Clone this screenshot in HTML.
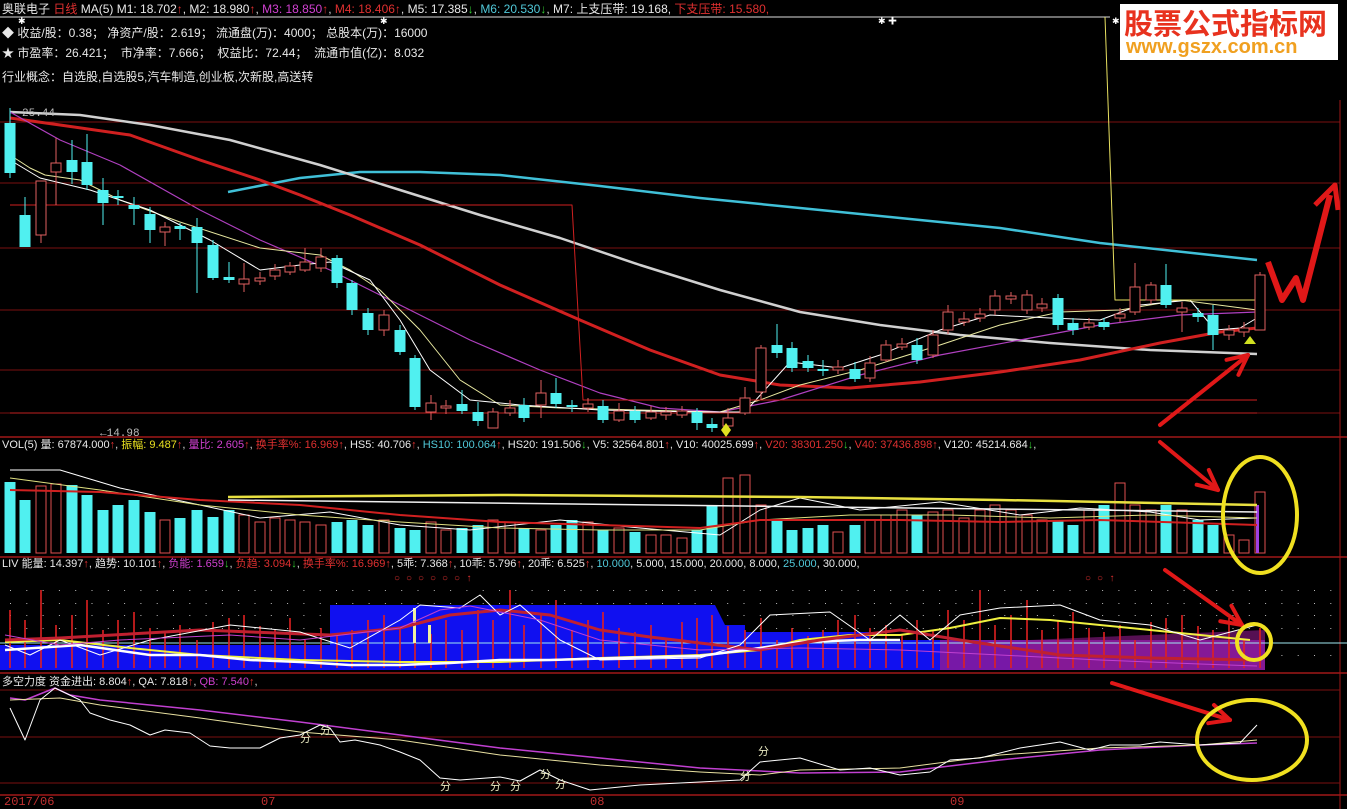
<!DOCTYPE html>
<html><head><meta charset="utf-8"><style>
html,body{margin:0;padding:0;background:#000;}
body{width:1347px;height:809px;overflow:hidden;position:relative;font-family:"Liberation Mono","Noto Sans CJK SC",monospace;}
.t{position:absolute;white-space:nowrap;font-size:11px;color:#ddd;line-height:13px;}
.w{color:#e8e8e8}.r{color:#e03030}.m{color:#d040d0}.c{color:#50c8d8}.y{color:#e8e020}
.cn{font-family:"Liberation Sans","Noto Sans CJK SC",sans-serif;}
#logo{position:absolute;left:1120px;top:4px;width:218px;height:56px;background:#fff;}
#logo .a{position:absolute;left:4px;top:0;font:bold 29px "Noto Sans CJK SC",sans-serif;color:#e8321e;letter-spacing:0px;line-height:36px;}
#logo .b{position:absolute;left:6px;top:32px;font:bold 20px "Liberation Sans",sans-serif;color:#f0a020;line-height:22px;}
</style></head><body>
<svg id="s" width="1347" height="809" style="position:absolute;left:0;top:0"></svg>

<div class="t cn" style="left:2px;top:3px;font-size:12px"><span class="w">奥联电子</span> <span class="r">日线</span> <span class="w">MA(5) M1: 18.702</span><span class="r">↑</span><span class="w">, M2: 18.980</span><span class="r">↑</span>, <span class="m">M3: 18.850</span><span class="r">↑</span>, <span class="r">M4: 18.406↑</span>, <span class="w">M5: 17.385</span><span style="color:#3c3">↓</span>, <span class="c">M6: 20.530</span><span style="color:#3c3">↓</span>, <span class="w">M7: 上支压带: 19.168,</span> <span class="r">下支压带: 15.580,</span></div>
<div class="t cn w" style="left:2px;top:27px;font-size:12px">◆ 收益/股：0.38； 净资产/股：2.619； 流通盘(万)：4000； 总股本(万)：16000</div>
<div class="t cn w" style="left:2px;top:47px;font-size:12px">★ 市盈率：26.421；&nbsp; 市净率：7.666；&nbsp; 权益比：72.44；&nbsp; 流通市值(亿)：8.032</div>
<div class="t cn w" style="left:2px;top:71px;font-size:12px">行业概念：自选股,自选股5,汽车制造,创业板,次新股,高送转</div>
<div class="t w" style="left:22px;top:108px;color:#bbb">25.44</div>
<div class="t w" style="left:100px;top:428px;color:#bbb">←14.98</div>

<div class="t cn" style="left:2px;top:439px"><span class="w">VOL(5) 量: 67874.000</span><span class="r">↑</span>, <span class="y">振幅: 9.487</span><span class="r">↑</span>, <span class="m">量比: 2.605</span><span class="r">↑</span>, <span class="r">换手率%: 16.969↑</span>, <span class="w">HS5: 40.706</span><span class="r">↑</span>, <span class="c">HS10: 100.064</span><span class="r">↑</span>, <span class="w">HS20: 191.506</span><span style="color:#3c3">↓</span>, <span class="w">V5: 32564.801</span><span class="r">↑</span>, <span class="w">V10: 40025.699</span><span class="r">↑</span>, <span class="r">V20: 38301.250</span><span style="color:#3c3">↓</span>, <span class="r">V40: 37436.898↑</span>, <span class="w">V120: 45214.684</span><span style="color:#3c3">↓</span>,</div>
<div class="t cn" style="left:2px;top:558px"><span class="w">LIV 能量: 14.397</span><span class="r">↑</span>, <span class="w">趋势: 10.101</span><span class="r">↑</span>, <span class="m">负能: 1.659</span><span style="color:#3c3">↓</span>, <span class="r">负趋: 3.094</span><span style="color:#3c3">↓</span>, <span class="r">换手率%: 16.969↑</span>, <span class="w">5乖: 7.368</span><span class="r">↑</span>, <span class="w">10乖: 5.796</span><span class="r">↑</span>, <span class="w">20乖: 6.525</span><span class="r">↑</span>, <span class="c">10.000</span>, <span class="w">5.000, 15.000, 20.000, 8.000,</span> <span class="c">25.000</span>, <span class="w">30.000,</span></div>
<div class="t cn" style="left:2px;top:676px"><span class="w">多空力度 资金进出: 8.804</span><span class="r">↑</span>, <span class="w">QA: 7.818</span><span class="r">↑</span>, <span class="m">QB: 7.540</span><span class="r">↑</span>,</div>
<div class="t r" style="left:4px;top:796px;color:#c03030;font-size:12px">2017/06</div>
<div class="t r" style="left:261px;top:796px;color:#c03030;font-size:12px">07</div>
<div class="t r" style="left:590px;top:796px;color:#c03030;font-size:12px">08</div>
<div class="t r" style="left:950px;top:796px;color:#c03030;font-size:12px">09</div>
<div class="t r" style="left:394px;top:573px;font-size:10px">○ ○ ○ ○ ○ ○ <b>↑</b></div>
<div class="t r" style="left:1085px;top:573px;font-size:10px">○ ○ <b>↑</b></div>

<div id="logo"><div class="a">股票公式指标网</div><div class="b">www.gszx.com.cn</div></div>

<script>
const NS="http://www.w3.org/2000/svg",S=document.getElementById('s');
function el(t,a){const e=document.createElementNS(NS,t);for(const k in a)e.setAttribute(k,a[k]);S.appendChild(e);return e;}
function pl(pts,c,w,extra){el('polyline',Object.assign({points:pts.map(p=>p.join(',')).join(' '),fill:'none',stroke:c,'stroke-width':w||1,'stroke-linejoin':'round'},extra||{}));}
function txt(x,y,s,c,fs){const e=el('text',{x:x,y:y,fill:c,'font-size':fs||11,'font-family':'Liberation Sans,Noto Sans CJK SC,sans-serif'});e.textContent=s;}
// grid lines
const red='#7a1010';
[122,183,248,310,370,413].forEach(y=>el('line',{x1:0,x2:1340,y1:y,y2:y,stroke:red,'stroke-width':1}));
[437,557,673,795].forEach(y=>el('line',{x1:0,x2:1347,y1:y,y2:y,stroke:'#a01818','stroke-width':1.5}));
el('line',{x1:1340,x2:1340,y1:100,y2:809,stroke:'#a01818'});
[690,737,783].forEach(y=>el('line',{x1:0,x2:1340,y1:y,y2:y,stroke:red}));
el('line',{x1:0,x2:1110,y1:17,y2:17,stroke:'#ddd'});
txt(18,24,'✱','#fff',9);txt(380,24,'✱','#fff',9);txt(878,24,'✱ ✚','#fff',9);txt(1112,24,'✱','#fff',9);
// dotted rows in LIV
for(let y of [590,603,615,628,655]){for(let x=10;x<1340;x+=16.3)el('rect',{x:x,y:y,width:1,height:1,fill:'#bbb'});}
// candles
const C=[[10,123,173,0,108,178],[25,215,247,0,197,247],[41,181,235,1,181,243],[56,163,172,1,138,205],[72,160,172,0,140,184],[87,162,185,0,134,190],[103,190,203,0,178,225],[118,196,198,0,190,205],[134,205,209,0,197,225],[150,214,230,0,207,243],[165,227,232,1,222,246],[180,226,229,0,223,240],[197,227,243,0,218,293],[213,245,278,0,240,280],[229,277,280,0,262,283],[244,279,284,1,263,292],[260,278,281,1,272,285],[275,270,276,1,264,280],[290,266,272,1,262,275],[305,262,270,1,248,272],[321,257,268,1,248,272],[337,258,283,0,255,288],[352,283,310,0,280,315],[368,313,330,0,308,335],[384,315,330,1,310,336],[400,330,352,0,325,355],[415,358,407,0,355,410],[431,403,412,1,395,420],[446,406,408,1,400,414],[462,404,411,0,390,414],[478,412,421,0,402,426],[493,412,428,1,408,428],[510,408,413,1,400,416],[524,405,418,0,398,422],[541,393,405,1,380,418],[556,393,404,0,378,408],[572,405,407,0,400,412],[588,404,408,1,398,412],[603,406,420,0,400,423],[619,411,420,1,403,422],[635,411,420,0,406,423],[651,412,418,1,406,420],[666,412,415,1,407,420],[682,411,415,1,406,418],[697,412,423,0,408,430],[712,424,428,0,418,432],[728,418,426,1,408,430],[745,398,413,1,387,415],[761,348,392,1,345,400],[777,345,353,0,324,358],[792,348,368,0,342,372],[808,361,368,0,355,372],[823,369,371,0,360,376],[838,367,370,1,360,374],[855,369,379,0,362,382],[870,363,378,1,356,382],[886,345,360,1,340,362],[902,344,347,1,338,350],[917,345,360,0,338,364],[933,335,355,1,330,358],[948,312,330,1,305,334],[964,319,322,1,312,326],[980,314,318,1,308,322],[995,296,310,1,290,315],[1011,296,299,1,292,304],[1027,295,310,1,290,314],[1042,304,308,1,298,312],[1058,298,325,0,294,330],[1073,323,330,0,318,335],[1089,323,327,1,318,330],[1104,322,327,0,318,330],[1120,314,318,1,308,322],[1135,287,312,1,263,315],[1151,285,300,1,282,304],[1166,285,305,0,264,308],[1182,308,312,1,302,332],[1198,313,317,0,308,322],[1213,315,335,0,305,350],[1229,330,335,1,325,340],[1244,328,332,1,322,337],[1260,275,330,1,272,330]];
// MAs first
pl([[228,192],[300,178],[360,172],[420,172],[500,175],[600,186],[700,198],[800,208],[900,218],[1000,228],[1100,243],[1257,260]],'#40c0d8',2.5);
pl([[10,112],[80,115],[150,125],[230,140],[320,165],[400,190],[480,215],[560,238],[640,265],[720,290],[800,312],[880,325],[960,335],[1050,343],[1150,350],[1257,354]],'#d0d0d0',2.5);
pl([[10,118],[60,125],[130,135],[200,160],[260,180],[300,195],[350,215],[420,245],[500,285],[580,320],[650,350],[720,375],[780,385],[850,388],[920,382],[1000,372],[1080,360],[1160,343],[1220,332],[1257,328]],'#d02020',3);
pl([[10,112],[60,140],[120,165],[200,210],[260,240],[330,270],[400,305],[470,340],[540,370],[600,393],[660,408],[720,412],[780,400],[860,375],[940,355],[1020,340],[1100,325],[1180,315],[1257,312]],'#b040c0',1.2);
pl([[10,155],[30,168],[45,175],[80,180],[120,200],[180,222],[260,248],[320,255],[350,270],[380,290],[420,330],[460,380],[500,405],[560,408],[640,410],[720,412],[760,400],[800,385],[860,370],[940,345],[1000,325],[1060,312],[1120,310],[1180,300],[1257,310]],'#e8e8a0',1);
pl([[10,160],[40,178],[90,190],[150,210],[210,240],[260,270],[300,265],[330,262],[370,280],[400,320],[430,370],[470,400],[520,405],[600,410],[700,412],[745,412],[790,362],[840,368],[880,355],[940,330],[990,315],[1050,318],[1100,320],[1140,305],[1190,300],[1215,330],[1240,328],[1257,318]],'#fff',1);
// step lines
pl([[10,205],[572,205],[583,400],[1257,400]],'#d02020',1);
pl([[10,413],[1257,413]],'#c02020',1);
pl([[1105,17],[1115,300],[1257,300]],'#e8e060',1);
C.forEach(c=>{const [x,t,b,u,h,l]=c;const col=u?'#e06060':'#50f0f0';
 el('line',{x1:x,x2:x,y1:h,y2:l,stroke:col});
 if(u)el('rect',{x:x-5,y:t,width:10,height:Math.max(b-t,1),fill:'#000',stroke:col});
 else el('rect',{x:x-5.5,y:t,width:11,height:Math.max(b-t,2),fill:col});});
el('polygon',{points:'726,423 731,430 726,437 721,430',fill:'#e0e020'});
el('polygon',{points:'1250,336 1256,344 1244,344',fill:'#d0e020'});
// volume
const V=[482,500,486,484,485,495,510,505,500,512,520,518,510,517,510,515,522,518,520,522,525,522,520,525,520,528,530,522,530,528,525,520,522,528,530,525,520,522,530,528,532,535,535,538,530,505,478,475,505,520,530,528,525,532,525,520,515,510,515,512,510,518,510,505,510,515,520,520,525,510,505,483,505,510,505,510,520,525,535,540,492];
C.forEach((c,i)=>{const y=V[i]||520;const u=c[3];if(u)el('rect',{x:c[0]-5,y:y,width:10,height:553-y,fill:'none',stroke:'#e05050'});else el('rect',{x:c[0]-5.5,y:y,width:11,height:553-y,fill:'#50f0f0'});});
el('rect',{x:1256,y:505,width:3,height:48,fill:'#a040e0'});
pl([[10,470],[60,470],[120,488],[200,505],[260,518],[330,512],[400,525],[470,530],[560,520],[640,528],[720,535],[760,510],[800,498],[860,510],[940,502],[1020,515],[1080,508],[1150,512],[1200,520],[1257,518]],'#fff',1);
pl([[10,478],[100,490],[200,505],[300,515],[400,522],[500,528],[600,530],[700,530],[760,520],[850,515],[950,515],[1050,518],[1150,515],[1257,518]],'#e0e080',1);
pl([[10,490],[100,492],[200,500],[300,505],[400,515],[500,522],[600,525],[700,528],[760,520],[900,520],[1000,522],[1100,520],[1257,525]],'#d02020',2);
pl([[228,497],[500,495],[800,497],[1000,500],[1257,505]],'#e8e040',2.5);
pl([[228,500],[1257,512]],'#f0f0f0',1.5);
// LIV
el('polygon',{points:'0,645 330,645 330,605 715,605 725,625 745,625 745,632 870,632 870,640 1265,640 1265,670 0,670',fill:'#1010f0'});
el('polygon',{points:'940,640 1265,640 1265,670 940,670',fill:'#8a1a9a','fill-opacity':'0.85'});
el('polygon',{points:'1030,640 1265,630 1265,670 1030,670',fill:'#901a8a','fill-opacity':'0.6'});
el('line',{x1:0,x2:1347,y1:643,y2:643,stroke:'#a0e8f0','stroke-width':1});
C.forEach((c,i)=>{const h=[610,620,590,625,615,600,630,620,612,628,632,625,640,622,618,615,626,630,618,640,628,636,630,620,615,628,625,634,620,630][i%30];el('line',{x1:c[0],x2:c[0],y1:h,y2:668,stroke:'#e02020','stroke-width':1.6});});
el('rect',{x:413,y:608,width:3,height:35,fill:'#f0f0a0'});el('rect',{x:428,y:625,width:3,height:18,fill:'#f0f0a0'});
pl([[5,642],[60,640],[130,648],[200,655],[300,660],[400,662],[500,662],[600,658],[700,655],[760,650],[800,640],[850,635],[900,635],[950,628],[1000,618],[1050,620],[1100,625],[1150,630],[1200,635],[1250,640]],'#f0f040',2);
pl([[5,650],[80,645],[150,655],[200,655],[250,660],[300,662],[350,665],[400,665],[450,663],[500,660],[550,660],[620,658],[700,656],[760,648],[800,642],[860,640],[900,640]],'#fff',2.5);
pl([[5,640],[60,638],[200,630],[330,635],[400,628],[450,615],[500,610],[550,615],[600,630],[650,637],[700,643],[760,650],[820,640],[900,630],[960,640],[1060,655],[1150,658],[1257,660]],'#c02030',3);
pl([[5,645],[30,655],[60,640],[100,655],[150,640],[230,625],[300,632],[350,648],[400,620],[420,605],[460,608],[480,595],[500,615],[520,605],[560,640],[600,660],[700,658],[740,645],[770,615],[830,612],[870,640],[900,615],[930,640],[960,615],[1000,608],[1060,605],[1100,620],[1150,625],[1200,640],[1257,625]],'#fff',1);
pl([[5,635],[60,645],[120,640],[230,635],[300,640],[400,628],[440,610],[470,606],[500,612],[540,620],[600,640],[700,650],[800,648],[900,650],[1000,655],[1100,660],[1200,664],[1257,666]],'#c040d0',1);
// bottom panel
pl([[10,698],[25,700],[55,688],[70,695],[100,700],[200,710],[300,722],[400,735],[500,748],[600,758],[700,768],[800,773],[900,772],[1000,760],[1100,750],[1200,745],[1257,743]],'#c040d0',1.5);
pl([[10,700],[60,698],[100,705],[200,718],[300,732],[400,740],[500,755],[600,765],[700,772],[760,775],[800,770],[900,768],[1000,755],[1100,748],[1200,745],[1257,740]],'#e8e0a0',1);
pl([[10,708],[25,740],[40,700],[55,688],[80,700],[90,713],[110,720],[130,725],[150,735],[165,730],[190,733],[210,746],[230,748],[260,748],[280,738],[300,735],[320,725],[330,728],[340,742],[355,740],[380,745],[400,752],[420,760],[440,778],[460,780],[500,777],[520,781],[540,770],[560,780],[590,790],[640,785],[700,782],[740,780],[760,762],[800,758],[840,770],[870,768],[900,775],[930,772],[950,760],[980,758],[1020,748],[1040,745],[1060,742],[1090,750],[1110,745],[1140,745],[1160,742],[1200,745],[1240,743],[1257,725]],'#fff',1);
[[300,742],[320,734],[440,790],[490,790],[510,790],[540,778],[555,788],[740,780],[758,755]].forEach(p=>txt(p[0],p[1],'分','#e8e8c0',11));
// annotations
const A='#e01818';
function arrow(x1,y1,x2,y2){el('line',{x1:x1,y1:y1,x2:x2,y2:y2,stroke:A,'stroke-width':4,'stroke-linecap':'round'});const a=Math.atan2(y2-y1,x2-x1),L=22;[0.45,-0.45].forEach(d=>el('line',{x1:x2,y1:y2,x2:x2-L*Math.cos(a+d),y2:y2-L*Math.sin(a+d),stroke:A,'stroke-width':4,'stroke-linecap':'round'}));}
pl([[1268,262],[1282,300],[1296,278],[1303,300],[1330,195]],A,6);
pl([[1315,205],[1335,185],[1338,210]],A,5);
arrow(1160,425,1248,355);
arrow(1160,442,1218,490);
arrow(1165,570,1242,625);
arrow(1112,683,1230,720);
el('ellipse',{cx:1260,cy:515,rx:37,ry:58,fill:'none',stroke:'#f0e020','stroke-width':4});
el('ellipse',{cx:1254,cy:642,rx:17,ry:18,fill:'none',stroke:'#f0e020','stroke-width':4});
el('ellipse',{cx:1252,cy:740,rx:55,ry:40,fill:'none',stroke:'#f0e020','stroke-width':4});
</script>
</body></html>
